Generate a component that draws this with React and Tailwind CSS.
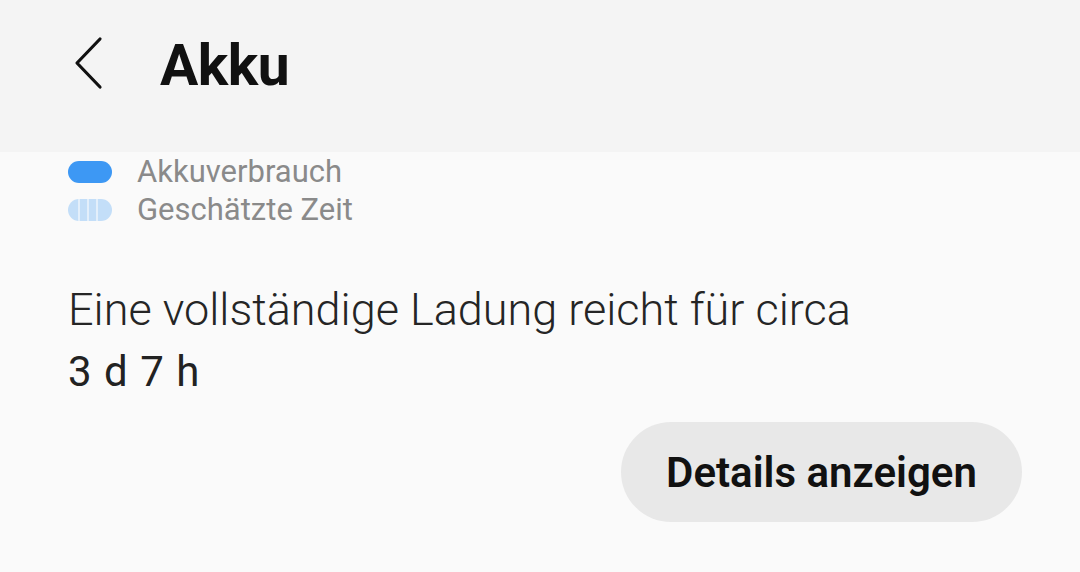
export default function App() {
  return (
    <div className="w-[1080px] h-[572px] overflow-hidden bg-[#fafafa]" style={{ fontFamily: "Roboto, 'Noto Sans', sans-serif" }}>
      <div className="h-[152px] bg-[#f4f4f4] flex items-start pt-[30px]">
        <div className="w-[160px] flex pl-[72px] pt-[6px]">
          <svg width="34" height="54" viewBox="0 0 34 54">
            <path d="M28 3 L5 27 L28 51" fill="none" stroke="#111" strokeWidth="3.2" strokeLinecap="round" strokeLinejoin="round" />
          </svg>
        </div>
        <div className="text-[57px] leading-[72px] font-bold text-[#111] tracking-[-0.5px]">Akku</div>
      </div>
      <div className="pl-[68px] pt-[2px]">
        <div className="flex items-center h-[36px]">
          <div className="w-[44px] h-[22px] rounded-full bg-[#3d98f4]" />
          <div className="ml-[25px] text-[31px] text-[#8a8a8a]">Akkuverbrauch</div>
        </div>
        <div className="flex items-center h-[40px]">
          <div className="w-[44px] h-[22px] rounded-full bg-[#c3def8] overflow-hidden flex">
            <div className="w-[10px] h-full shrink-0" />
            <div className="w-[2px] h-full shrink-0 bg-[#e3effb]" />
            <div className="w-[7px] h-full shrink-0" />
            <div className="w-[2px] h-full shrink-0 bg-[#e3effb]" />
            <div className="w-[7px] h-full shrink-0" />
            <div className="w-[2px] h-full shrink-0 bg-[#e3effb]" />
          </div>
          <div className="ml-[25px] text-[31px] text-[#8a8a8a]">Geschätzte Zeit</div>
        </div>
        <div className="mt-[49px] text-[45px] leading-[62px] text-[#252525] font-light">Eine vollständige Ladung reicht für circa</div>
        <div className="text-[42px] leading-[62px] text-[#222] font-normal tracking-[1px]">3 d 7 h</div>
      </div>
      <div className="flex justify-end pr-[58px] mt-[19px]">
        <div className="w-[401px] h-[100px] rounded-full bg-[#e8e8e8] flex items-center justify-center text-[42px] font-semibold text-[#111]">Details anzeigen</div>
      </div>
    </div>
  );
}
